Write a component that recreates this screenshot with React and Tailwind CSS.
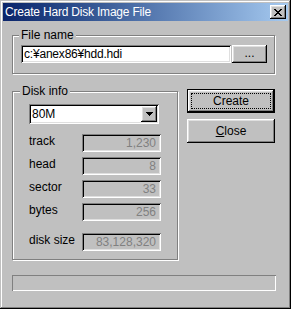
const raised = "shadow-[inset_-1px_-1px_#000,inset_1px_1px_#fff,inset_-2px_-2px_#808080,inset_2px_2px_#dfdfdf]";
const sunken = "shadow-[inset_1px_1px_#808080,inset_-1px_-1px_#fff,inset_2px_2px_#000,inset_-2px_-2px_#dfdfdf]";
const etched = "border border-[#808080] shadow-[1px_1px_0_#fff,inset_1px_1px_0_#fff]";

function Field({ label, value, className = "" }) {
  return (
    <div className={"flex items-center " + className}>
      <span className="w-[53px] leading-[14px] -mt-[4px]">{label}</span>
      <div className={"w-[79px] h-[18px] bg-[#c0c0c0] flex items-center justify-end pr-[5px] text-[#808080] " + sunken}>
        {value}
      </div>
    </div>
  );
}

export default function App() {
  return (
    <div className={"w-[291px] h-[309px] bg-[#c0c0c0] p-[3px] flex flex-col text-[12px] text-black font-['Liberation_Sans',Arial,sans-serif] shadow-[inset_-1px_-1px_#000,inset_1px_1px_#c0c0c0,inset_-2px_-2px_#808080,inset_2px_2px_#fff]"}>
      {/* Title bar */}
      <div className="h-[18px] flex items-center justify-between bg-gradient-to-r from-[#0a246a] to-[#a6caf0] pl-[2px] pr-[2px]">
        <span className="text-white leading-[16px] text-[12px] tracking-[-0.2px]">Create Hard Disk Image File</span>
        <div className={"w-[16px] h-[14px] bg-[#c0c0c0] flex items-center justify-center " + raised}>
          <svg width="8" height="7" viewBox="0 0 8 7" shapeRendering="crispEdges">
            <path d="M0 0h2v1h-2zM6 0h2v1h-2zM1 1h2v1h-2zM5 1h2v1h-2zM2 2h4v1h-4zM3 3h2v1h-2zM2 4h4v1h-4zM1 5h2v1h-2zM5 5h2v1h-2zM0 6h2v1h-2zM6 6h2v1h-2z" fill="#000" />
          </svg>
        </div>
      </div>

      {/* File name group */}
      <div className={"relative mt-[14px] ml-[9px] w-[263px] h-[39px] pt-[9px] pl-[8px] flex " + etched}>
        <span className="absolute left-[6px] -top-[8px] px-[2px] bg-[#c0c0c0] leading-[14px]">File name</span>
        <div className={"w-[210px] h-[18px] bg-white flex items-center pl-[3px] leading-[14px] tracking-[-0.2px] " + sunken}>
          c:¥anex86¥hdd.hdi
        </div>
        <div className={"w-[35px] h-[18px] ml-[1px] bg-[#c0c0c0] flex items-center justify-center leading-[14px] pb-[2px] " + raised}>
          ...
        </div>
      </div>

      {/* Disk info + buttons */}
      <div className="flex items-start mt-[15px] ml-[9px]">
        <div className={"relative mt-[2px] w-[166px] h-[169px] pt-[12px] pl-[16px] flex flex-col " + etched}>
          <span className="absolute left-[7px] -top-[8px] px-[2px] bg-[#c0c0c0] leading-[14px]">Disk info</span>
          <div className={"w-[130px] h-[20px] bg-white flex items-center justify-between p-[2px] " + sunken}>
            <span className="pl-[1px] leading-[14px]">80M</span>
            <div className={"w-[16px] h-[16px] bg-[#c0c0c0] flex items-center justify-center " + raised}>
              <svg width="7" height="4" viewBox="0 0 7 4" shapeRendering="crispEdges">
                <path d="M0 0h7v1h-7zM1 1h5v1h-5zM2 2h3v1h-3zM3 3h1v1h-1z" fill="#000" />
              </svg>
            </div>
          </div>
          <Field label="track" value="1,230" className="mt-[10px]" />
          <Field label="head" value="8" className="mt-[5px]" />
          <Field label="sector" value="33" className="mt-[5px]" />
          <Field label="bytes" value="256" className="mt-[5px]" />
          <Field label="disk size" value="83,128,320" className="mt-[12px]" />
        </div>

        <div className="ml-[9px] flex flex-col gap-[6px]">
          <div className="w-[88px] h-[24px] bg-black p-[1px]">
            <div className={"w-full h-full bg-[#c0c0c0] flex items-center justify-center p-[3px] " + raised}>
              <div className="w-full h-full border border-dotted border-black flex items-center justify-center leading-[14px]">
                Create
              </div>
            </div>
          </div>
          <div className={"w-[88px] h-[24px] bg-[#c0c0c0] flex items-center justify-center leading-[14px] " + raised}>
            <span><span className="underline">C</span>lose</span>
          </div>
        </div>
      </div>

      {/* Status bar */}
      <div className="mt-[15px] ml-[9px] w-[264px] h-[16px] shadow-[inset_1px_1px_#808080,inset_-1px_-1px_#fff]" />
    </div>
  );
}
